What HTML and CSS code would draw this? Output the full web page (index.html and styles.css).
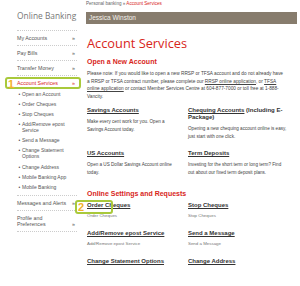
FILE: index.html
```html
<!DOCTYPE html>
<html>
  <head>
    <meta charset="utf-8" />
    <title>Account Services</title>
    <link rel="stylesheet" href="styles.css">
  </head>
  <body>
    <div class="page">
      <div class="sidebar">
        <h2 class="side-title">Online Banking</h2>
        <ul class="side-nav">
          <li><a href="#">My Accounts</a><span class="arrow">»</span></li>
          <li><a href="#">Pay Bills</a><span class="arrow">»</span></li>
          <li><a href="#">Transfer Money</a><span class="arrow">»</span></li>
          <li class="has-sub">
            <div class="side-row active"><a href="#">Account Services</a><span class="arrow">»</span></div>
            <ul class="sub-nav">
              <li><a href="#">Open an Account</a></li>
              <li><a href="#">Order Cheques</a></li>
              <li><a href="#">Stop Cheques</a></li>
              <li><a href="#">Add/Remove epost Service</a></li>
              <li><a href="#">Send a Message</a></li>
              <li><a href="#">Change Statement Options</a></li>
              <li><a href="#">Change Address</a></li>
              <li><a href="#">Mobile Banking App</a></li>
              <li><a href="#">Mobile Banking</a></li>
            </ul>
          </li>
          <li><a href="#">Messages and Alerts</a><span class="arrow">»</span></li>
          <li><a href="#">Profile and Preferences</a><span class="arrow">»</span></li>
        </ul>
        <!-- annotation -->
        <div class="callout callout-1"><span class="callout-num">1</span></div>
      </div>

      <div class="content">
        <div class="breadcrumb">Personal banking » <span class="current">Account Services</span></div>
        <div class="user-bar">Jessica Winston</div>

        <h1 class="page-title">Account Services</h1>

        <h3 class="section-title">Open a New Account</h3>
        <p class="note">
          Please note: If you would like to open a new RRSP or TFSA account and do not already have<br>
          a RRSP or TFSA contract number, please complete our <a href="#">RRSP online application</a>, or <a href="#">TFSA<br>
          online application</a> or contact Member Services Centre at 604-877-7000 or toll free at 1-888-<br>
          Vancity.
        </p>

        <div class="cards">
          <div class="card">
            <h4><a href="#">Savings Accounts</a></h4>
            <p>Make every cent work for you. Open a Savings Account today.</p>
          </div>
          <div class="card">
            <h4><a href="#">Chequing Accounts</a> (Including E-Package)</h4>
            <p>Opening a new chequing account online is easy, just start with one click.</p>
          </div>
          <div class="card">
            <h4><a href="#">US Accounts</a></h4>
            <p>Open a US Dollar Savings Account online today.</p>
          </div>
          <div class="card">
            <h4><a href="#">Term Deposits</a></h4>
            <p>Investing for the short term or long term? Find out about our fixed term deposit plans.</p>
          </div>
        </div>

        <h3 class="section-title settings-title">Online Settings and Requests</h3>
        <div class="cards settings">
          <div class="card">
            <h4><a href="#">Order Cheques</a></h4>
            <p>Order Cheques</p>
            <div class="callout callout-2"><span class="callout-num">2</span></div>
          </div>
          <div class="card">
            <h4><a href="#">Stop Cheques</a></h4>
            <p>Stop Cheques</p>
          </div>
          <div class="card">
            <h4><a href="#">Add/Remove epost Service</a></h4>
            <p>Add/Remove epost Service</p>
          </div>
          <div class="card">
            <h4><a href="#">Send a Message</a></h4>
            <p>Send a Message</p>
          </div>
          <div class="card">
            <h4><a href="#">Change Statement Options</a></h4>
          </div>
          <div class="card">
            <h4><a href="#">Change Address</a></h4>
          </div>
        </div>
      </div>
    </div>
  </body>
</html>
```

FILE: styles.css
```css
body {
  font-family: "Liberation Sans", Arial, sans-serif;
  margin: 0;
  padding: 0;
  background: #fff;
  color: #444;
}

a {
  color: inherit;
  text-decoration: none;
}

ul {
  list-style: none;
  margin: 0;
  padding: 0;
}

.page {
  display: flex;
  width: 300px;
}

/* Sidebar styles */
.sidebar {
  position: relative;
  width: 60px;
  margin-left: 17px;
  flex-shrink: 0;
}

.side-title {
  margin: 0;
  padding-top: 10px;
  height: 20px;
  font-family: "Open Sans", sans-serif;
  font-weight: 400;
  font-size: 8.4px;
  line-height: 12px;
  color: #777;
}

.side-nav {
  border-top: 1px dotted #ccc;
  font-size: 5.3px;
  line-height: 6px;
  color: #555;
}

.side-nav > li,
.side-row {
  display: flex;
  justify-content: space-between;
  align-items: flex-end;
}

.side-nav > li {
  padding: 4px 0;
  border-bottom: 1px dotted #ccc;
}

.side-nav > li > a {
  max-width: 52px;
}

.side-nav > li.has-sub {
  display: block;
  padding-bottom: 5.5px;
}

.side-row.active {
  color: #d8261b;
}

.arrow {
  padding-right: 2px;
}

.sub-nav {
  margin-top: 5px;
  font-size: 5px;
  color: #555;
}

.sub-nav li {
  position: relative;
  padding-left: 5px;
  margin-bottom: 4.1px;
}

.sub-nav li::before {
  content: "•";
  position: absolute;
  left: 1.5px;
}

.sub-nav li:last-child {
  margin-bottom: 0;
}

/* Annotation boxes */
.callout {
  position: absolute;
  border: 2px solid #a9c93b;
  border-radius: 3px;
}

.callout-num {
  position: absolute;
  left: 1px;
  top: -1px;
  font-size: 11px;
  line-height: 12px;
  font-weight: bold;
  color: #f2b229;
}

.callout-1 {
  left: -12px;
  top: 77px;
  width: 72px;
  height: 8px;
}

.callout-2 {
  left: -12px;
  top: -2px;
  width: 34px;
  height: 10px;
}

/* Main content */
.content {
  margin-left: 9px;
  width: 211px;
}

.breadcrumb {
  font-size: 4.6px;
  line-height: 8px;
  color: #666;
}

.breadcrumb .current {
  color: #d8261b;
}

.user-bar {
  margin-top: 4px;
  height: 12px;
  padding-left: 3px;
  background-color: #877c6d;
  color: #f4f1ec;
  font-size: 6.5px;
  line-height: 12px;
}

.page-title {
  margin: 11px 0 0 1px;
  font-family: "Open Sans", sans-serif;
  font-weight: 400;
  font-size: 12.8px;
  line-height: 16px;
  color: #d8261b;
}

.section-title {
  margin: 7px 0 0 1px;
  font-size: 7px;
  line-height: 8px;
  color: #d8261b;
}

.note {
  margin: 4px 0 0 1px;
  width: 210px;
  font-size: 4.75px;
  line-height: 7.7px;
  white-space: nowrap;
}

.note a {
  text-decoration: underline;
}

.cards {
  display: grid;
  grid-template-columns: 94px 100px;
  column-gap: 7px;
  row-gap: 10px;
  margin: 6.5px 0 0 1px;
}

.card {
  position: relative;
}

.card h4 {
  margin: 0 0 4px;
  font-size: 6px;
  line-height: 7px;
  color: #333;
}

.card h4 a {
  text-decoration: underline;
}

.card p {
  margin: 0;
  font-size: 4.6px;
  line-height: 7.5px;
}

.settings-title {
  margin-top: 13.5px;
}

.settings {
  margin-top: 4.5px;
  row-gap: 11px;
}

.settings .card h4 {
  margin-bottom: 3px;
}

.settings .card p {
  font-size: 4.4px;
  line-height: 7px;
  color: #777;
}
```
